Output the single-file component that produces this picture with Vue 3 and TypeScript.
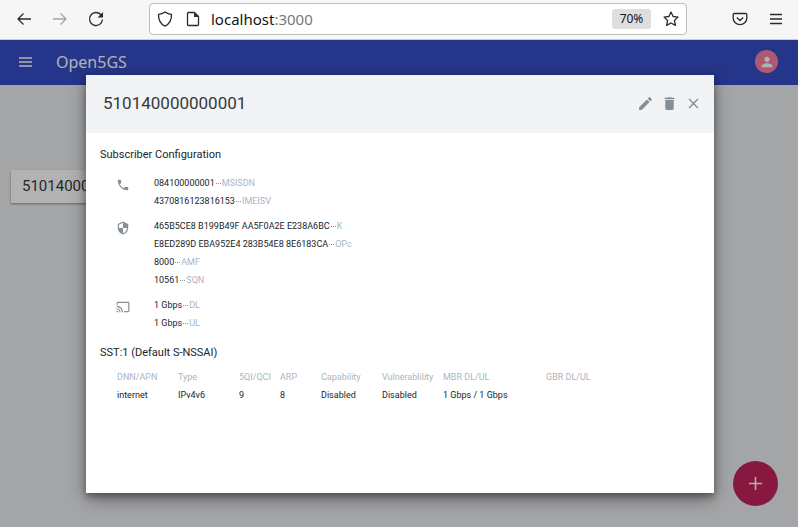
<script setup lang="ts">
interface Entry {
  value: string
  label: string
}

interface Group {
  icon: string
  entries: Entry[]
}

const imsi = '510140000000001'

const icons = {
  phone:
    'M6.62 10.79c1.44 2.83 3.76 5.14 6.59 6.59l2.2-2.2c.27-.27.67-.36 1.02-.24 1.12.37 2.33.57 3.57.57.55 0 1 .45 1 1V20c0 .55-.45 1-1 1-9.39 0-17-7.61-17-17 0-.55.45-1 1-1h3.5c.55 0 1 .45 1 1 0 1.25.2 2.45.57 3.57.11.35.03.74-.25 1.02l-2.2 2.2z',
  security:
    'M12 1L3 5v6c0 5.55 3.84 10.74 9 12 5.16-1.26 9-6.45 9-12V5l-9-4zm0 10.99h7c-.53 4.12-3.28 7.79-7 8.94V12H5V6.3l7-3.11v8.8z',
  cast:
    'M21 3H3c-1.1 0-2 .9-2 2v3h2V5h18v14h-7v2h7c1.1 0 2-.9 2-2V5c0-1.1-.9-2-2-2zM1 18v3h3c0-1.66-1.34-3-3-3zm0-4v2c2.76 0 5 2.24 5 5h2c0-3.87-3.13-7-7-7zm0-4v2c4.97 0 9 4.03 9 9h2c0-6.08-4.93-11-11-11z',
  edit:
    'M3 17.25V21h3.75L17.81 9.94l-3.75-3.75L3 17.25zM20.71 7.04c.39-.39.39-1.02 0-1.41l-2.34-2.34c-.39-.39-1.02-.39-1.41 0l-1.83 1.83 3.75 3.75 1.83-1.83z',
  trash: 'M6 19c0 1.1.9 2 2 2h8c1.1 0 2-.9 2-2V7H6v12zM19 4h-3.5l-1-1h-5l-1 1H5v2h14V4z',
  close:
    'M19 6.41L17.59 5 12 10.59 6.41 5 5 6.41 10.59 12 5 17.59 6.41 19 12 13.41 17.59 19 19 17.59 13.41 12z',
  person:
    'M12 12c2.21 0 4-1.79 4-4s-1.79-4-4-4-4 1.79-4 4 1.79 4 4 4zm0 2c-2.67 0-8 1.34-8 4v2h16v-2c0-2.66-5.33-4-8-4z',
}

const groups: Group[] = [
  {
    icon: icons.phone,
    entries: [
      { value: '084100000001', label: 'MSISDN' },
      { value: '4370816123816153', label: 'IMEISV' },
    ],
  },
  {
    icon: icons.security,
    entries: [
      { value: '465B5CE8 B199B49F AA5F0A2E E238A6BC', label: 'K' },
      { value: 'E8ED289D EBA952E4 283B54E8 8E6183CA', label: 'OPc' },
      { value: '8000', label: 'AMF' },
      { value: '10561', label: 'SQN' },
    ],
  },
  {
    icon: icons.cast,
    entries: [
      { value: '1 Gbps', label: 'DL' },
      { value: '1 Gbps', label: 'UL' },
    ],
  },
]

const columns = ['DNN/APN', 'Type', '5QI/QCI', 'ARP', 'Capability', 'Vulnerablility', 'MBR DL/UL', 'GBR DL/UL']
const sessions = [['internet', 'IPv4v6', '9', '8', 'Disabled', 'Disabled', '1 Gbps / 1 Gbps', '']]
</script>

<template>
  <div class="window">
    <div class="toolbar">
      <div class="nav">
        <button type="button" aria-label="Back">
          <svg viewBox="0 0 16 16"><path d="M15 8H2M7.500 2.500L2 8l5.500 5.500" /></svg>
        </button>
        <button type="button" aria-label="Forward" class="dim">
          <svg viewBox="0 0 16 16"><path d="M1 8h13M8.500 2.500L14 8l-5.500 5.500" /></svg>
        </button>
        <button type="button" aria-label="Reload">
          <svg viewBox="0 0 16 16">
            <path d="M13.300 4.200A6.500 6.500 0 1 0 14.500 8.500" />
            <path class="solid" d="M15 1v5.500H9.500z" />
          </svg>
        </button>
      </div>
      <div class="address">
        <svg viewBox="0 0 16 16"><path d="M8 1c2 1.500 4.300 2.200 6.500 2.300C14.700 8.500 12.500 13 8 15.200 3.500 13 1.300 8.500 1.500 3.300 3.700 3.200 6 2.500 8 1z" /></svg>
        <svg viewBox="0 0 16 16"><path d="M2.500 2.500q0-1 1-1H9.500l4 4v8q0 1-1 1h-9q-1 0-1-1z" /><path class="solid" d="M9 1.500v4.500h4.500z" /></svg>
        <span class="url">localhost<span>:3000</span></span>
        <button type="button" class="zoom">70%</button>
        <button type="button" class="star" aria-label="Bookmark">
          <svg viewBox="0 0 16 16"><path d="M8 1l2.100 4.500 4.900.600-3.600 3.400 1 4.900L8 12l-4.400 2.400 1-4.900L1 6.100l4.900-.600z" /></svg>
        </button>
      </div>
      <div class="extras">
        <button type="button" aria-label="Save to Pocket">
          <svg viewBox="0 0 16 16"><path d="M2.300 2.500h11.400q1.100 0 1.100 1.100v3.600a6.800 6.500 0 0 1-13.600 0V3.600q0-1.100 1.100-1.100zM4.800 6.500L8 9.500l3.200-3" /></svg>
        </button>
        <button type="button" aria-label="Menu">
          <svg viewBox="0 0 16 16"><path d="M2 3.500h12M2 8h12M2 12.500h12" /></svg>
        </button>
      </div>
    </div>

    <div class="page">
      <header class="appbar">
        <button type="button" class="burger" aria-label="Open navigation">
          <svg viewBox="0 0 14 10"><path d="M1 1h13M1 5h13M1 9h13" /></svg>
        </button>
        <h1>Open5GS</h1>
        <button type="button" class="avatar" aria-label="Account">
          <svg viewBox="0 0 24 24"><path :d="icons.person" /></svg>
        </button>
      </header>
      <main>
        <a class="card" href="#">{{ imsi }}</a>
      </main>
      <button type="button" class="add" aria-label="Add subscriber">
        <svg viewBox="0 0 13 13"><path d="M6.500 0v13M0 6.500h13" /></svg>
      </button>

      <div class="overlay">
        <section class="dialog" role="dialog" aria-labelledby="dialog-title">
          <header class="dialog-head">
            <h2 id="dialog-title">{{ imsi }}</h2>
            <button type="button" aria-label="Edit"><svg viewBox="0 0 24 24"><path :d="icons.edit" /></svg></button>
            <button type="button" aria-label="Delete"><svg viewBox="0 0 24 24"><path :d="icons.trash" /></svg></button>
            <button type="button" aria-label="Close"><svg viewBox="0 0 24 24"><path :d="icons.close" /></svg></button>
          </header>
          <div class="dialog-body">
            <h3>Subscriber Configuration</h3>
            <div class="groups">
              <div v-for="(group, i) in groups" :key="i" class="group">
                <svg viewBox="0 0 24 24"><path :d="group.icon" /></svg>
                <ul>
                  <li v-for="entry in group.entries" :key="entry.label">
                    {{ entry.value }}<span class="muted"><i></i>{{ entry.label }}</span>
                  </li>
                </ul>
              </div>
            </div>
            <h3>SST:1 (Default S-NSSAI)</h3>
            <table>
              <colgroup>
                <col class="wide" /><col class="wide" /><col class="narrow" /><col class="narrow" />
                <col class="wide" /><col class="wide" /><col class="rate" /><col class="rate" />
              </colgroup>
              <thead>
                <tr><th v-for="column in columns" :key="column" scope="col">{{ column }}</th></tr>
              </thead>
              <tbody>
                <tr v-for="(session, r) in sessions" :key="r">
                  <td v-for="(cell, c) in session" :key="c">{{ cell }}</td>
                </tr>
              </tbody>
            </table>
          </div>
        </section>
      </div>
    </div>
  </div>
</template>

<style>
body {
  margin: 0;
}
</style>

<style scoped>
.window {
  display: flex;
  flex-direction: column;
  min-height: 100vh;
  font-family: Roboto, "Liberation Sans", sans-serif;
}

button {
  display: flex;
  align-items: center;
  justify-content: center;
  padding: 0;
  border: 0;
  background: none;
  font: inherit;
}

h1,
h2,
h3,
ul {
  margin: 0;
  padding: 0;
  font-weight: 400;
}

.toolbar {
  display: flex;
  align-items: center;
  box-sizing: border-box;
  height: 40px;
  padding: 0 14px 1px 16px;
  border-bottom: 1px solid #ccc;
  background: #f6f6f6;
}

.toolbar svg {
  width: 16px;
  height: 16px;
  fill: none;
  stroke: #2b2a2d;
  stroke-width: 1.3;
  stroke-linejoin: round;
}

.toolbar .solid {
  fill: #2b2a2d;
  stroke: none;
}

.nav {
  display: flex;
  gap: 20px;
}

.dim {
  opacity: 0.4;
}

.address {
  display: flex;
  flex: 1;
  align-items: center;
  box-sizing: border-box;
  height: 32px;
  margin-left: 45px;
  padding: 0 7px;
  border: 1px solid #bdbdbd;
  border-radius: 4px;
  background: #fff;
}

.address > svg + svg {
  margin-left: 12px;
}

.url {
  flex: 1;
  margin-left: 10px;
  font: 15px/20px "Noto Sans", sans-serif;
  color: #151515;
}

.url span {
  color: #777;
}

.zoom {
  width: 39px;
  height: 20px;
  margin-right: 12px;
  border-radius: 3px;
  background: #dedede;
  font: 12px/20px "Noto Sans", sans-serif;
  color: #151515;
}

.extras {
  display: flex;
  gap: 20px;
  margin-left: 45px;
}

.page {
  position: relative;
  display: flex;
  flex: 1;
  flex-direction: column;
  background: #ebedf0;
}

.appbar {
  display: flex;
  align-items: center;
  box-sizing: border-box;
  height: 45px;
  padding: 0 20px 2px 18px;
  background: #364dc5;
}

.burger svg {
  width: 14px;
  height: 10px;
  stroke: #fff;
  stroke-width: 1.3;
}

.appbar h1 {
  flex: 1;
  margin-left: 24px;
  font: 16px/24px "Noto Sans", sans-serif;
  color: #fff;
}

.avatar {
  width: 23px;
  height: 23px;
  border-radius: 50%;
  background: #f781a6;
}

.avatar svg {
  width: 16px;
  height: 16px;
  fill: #fff;
}

main {
  padding: 85px 11px;
}

.card {
  display: block;
  width: 240px;
  padding: 0 11px;
  background: #fff;
  box-shadow: 0 1px 2px rgba(0, 0, 0, 0.4);
  font-size: 15px;
  line-height: 33px;
  color: #343a40;
  text-decoration: none;
}

.add {
  position: absolute;
  right: 20px;
  bottom: 21px;
  width: 45px;
  height: 45px;
  border-radius: 50%;
  background: #c2255c;
}

.add svg {
  width: 13px;
  height: 13px;
  stroke: #fff;
  stroke-width: 1.6;
}

.overlay {
  position: absolute;
  inset: 0;
  display: flex;
  align-items: stretch;
  padding: 35px 84px 34px 86px;
  background: rgba(0, 0, 0, 0.3);
}

.dialog {
  flex: 1;
  background: #fff;
  box-shadow: 0 6px 16px rgba(0, 0, 0, 0.4), 0 3px 6px rgba(0, 0, 0, 0.3);
}

.dialog-head {
  display: flex;
  align-items: center;
  gap: 7px;
  box-sizing: border-box;
  height: 58px;
  padding: 0 12px 2px 17px;
  background: #f1f3f5;
}

.dialog-head h2 {
  flex: 1;
  font-size: 17px;
  line-height: 24px;
  color: #343a40;
}

.dialog-head svg {
  width: 17px;
  height: 17px;
  fill: #868e96;
}

.dialog-body {
  padding: 13px 14px;
  color: #212529;
}

h3 {
  font-size: 11px;
  line-height: 18px;
}

.groups {
  display: flex;
  flex-direction: column;
  gap: 7px;
  padding: 10px 16px 12px;
}

.group {
  display: flex;
  gap: 24px;
}

.group svg {
  width: 14px;
  height: 14px;
  margin-top: 4px;
  fill: #868e96;
}

ul {
  list-style: none;
}

li {
  font-size: 9px;
  line-height: 18px;
}

.muted {
  color: #adb5bd;
}

.muted i {
  display: inline-block;
  width: 5px;
  height: 1px;
  margin: 0 1px 2px;
  background: repeating-linear-gradient(90deg, #868e96 0 1px, transparent 1px 2px);
}

table {
  width: 532px;
  margin: 6px 17px;
  border-collapse: collapse;
  table-layout: fixed;
  font-size: 9px;
  line-height: 18px;
  text-align: left;
}

th,
td {
  padding: 0;
  font-weight: 400;
  white-space: nowrap;
}

th {
  color: #adb5bd;
}

.wide {
  width: 61px;
}

.narrow {
  width: 41px;
}

.rate {
  width: 103px;
}
</style>
